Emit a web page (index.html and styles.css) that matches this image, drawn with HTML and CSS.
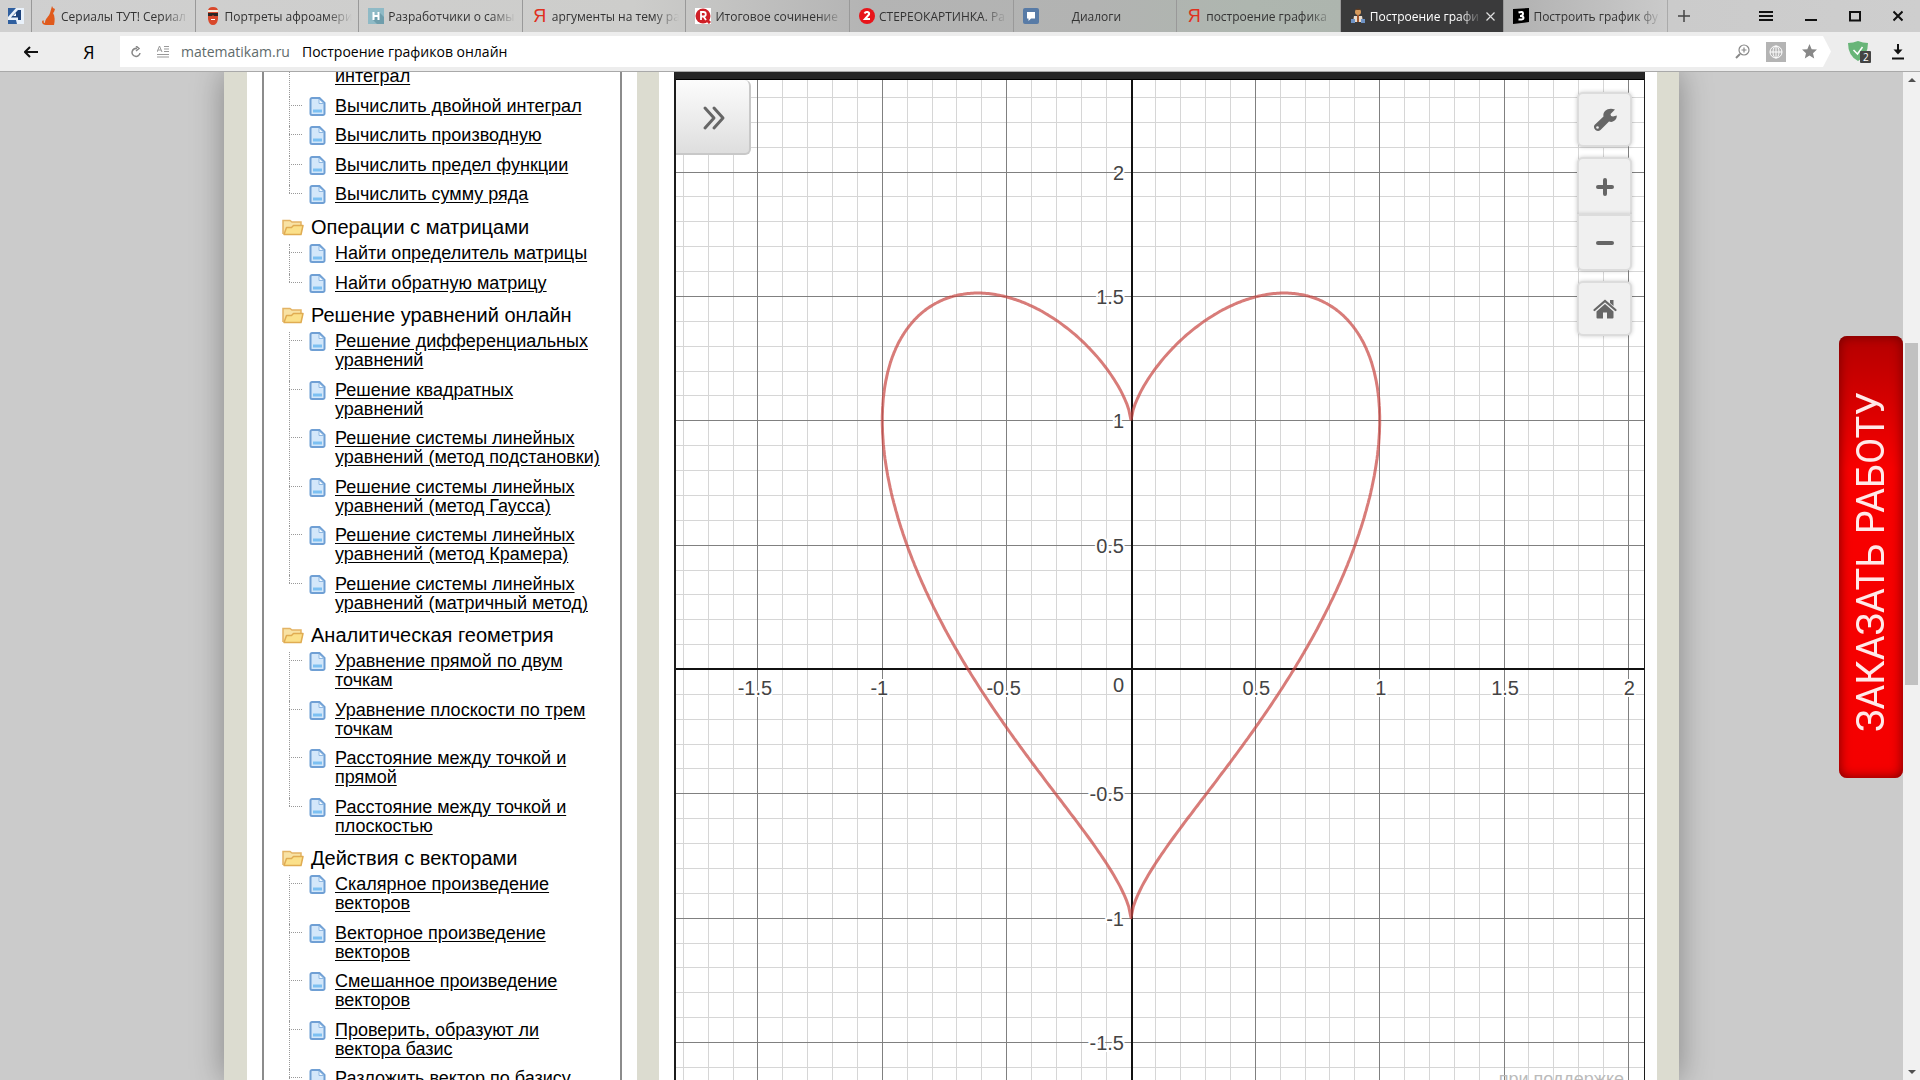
FILE: index.html
```html
<!DOCTYPE html>
<html lang="ru">
<head>
    <meta charset="UTF-8">
    <meta name="viewport" content="width=device-width, initial-scale=1.0">
    <title>Построение графиков онлайн</title>
    <link rel="stylesheet" href="styles.css">
</head>
<body>
    <!-- Shared icons -->
    <svg class="sprite" aria-hidden="true">
        <symbol id="icon-page" viewBox="0 0 17 19">
            <path d="M3 1h7.500l5 5v10.500a1.500 1.500 0 0 1-1.500 1.500H3A1.500 1.500 0 0 1 1.500 16.500V2.500A1.500 1.500 0 0 1 3 1z" fill="#d3e7fa" stroke="#6f9fd4" stroke-width="2"/>
            <path d="M10 2v4.500h5z" fill="#f2f9ff" stroke="#8fb8e2" stroke-width="1"/>
            <path d="M4 12.500h9v3H4z" fill="#7cc0f2"/>
        </symbol>
        <symbol id="icon-folder" viewBox="0 0 22 18">
            <path d="M1 16V2.500h7l2 1.500h9v4" fill="#f8e2a4" stroke="#e3b364" stroke-width="1.500"/>
            <path d="M2 16.500 4.500 9.500h5l2-2h9.500l-2 9z" fill="#fbe08a" stroke="#e0ac52" stroke-width="1.500" stroke-linejoin="round"/>
        </symbol>
    </svg>

    <header class="browser">
        <nav class="tabs">
            <button class="pinned" aria-label="Закреплённая вкладка">
                <svg width="16" height="16" viewBox="0 0 16 16"><path d="M0 0h16v16H0z" fill="#2f5f9f"/><path d="M8 0 0 9v3h8l1 4h7V0z" fill="#e9f1fa"/><path d="M10 2 3 9.500h7z" fill="#1d437c"/><path d="M10 2h3v10h-3z" fill="#1d437c"/><path d="M8 5v3H5z" fill="#fff"/></svg>
            </button>
            <button class="tab">
                <svg width="16" height="20" viewBox="0 0 16 20"><path d="M11 0l1 2 2 1-1 3-1 1c2 3 2 8 1 12H5c-2 0-4-1-4-3 0-1 1-2 2-1-1 1 0 2 1 2 0-5 4-6 5-10z" fill="#e05a1c"/></svg>
                <span>Сериалы ТУТ! Сериал</span>
            </button>
            <button class="tab">
                <svg width="16" height="20" viewBox="0 0 16 20"><path d="M3 5q0-4 5-4t5 4v8q-1 6-5 6t-5-6z" fill="#d9482b"/><path d="M3 4h10v2H3z" fill="#f6ead9"/><path d="M3 7h10v3H9l-1-1-1 1H3z" fill="#2b2625"/><path d="M6 13h4v1H6z" fill="#fff"/></svg>
                <span>Портреты афроамери</span>
            </button>
            <button class="tab">
                <svg width="16" height="16" viewBox="0 0 16 16"><path d="M0 0h16v16H0z" fill="#8fbac6"/><path d="M11 4l5 5v7H9l-4-4z" fill="#6f9eac"/><path d="M5.500 4v8M10.500 4v8M5.500 8h5" stroke="#fff" stroke-width="2"/></svg>
                <span>Разработчики о самы</span>
            </button>
            <button class="tab">
                <b class="ya">Я</b>
                <span>аргументы на тему ра</span>
            </button>
            <button class="tab">
                <svg width="16" height="16" viewBox="0 0 16 16"><path d="M0 0h16v16H0z" fill="#fff"/><circle cx="8" cy="8" r="7.500" fill="#cf1f26"/><path d="M11 11l4 4" stroke="#cf1f26" stroke-width="3"/><path d="M6 12V4h2.500a2 2 0 0 1 0 4.500H6M8.500 8.500 11 12" fill="none" stroke="#fff" stroke-width="1.800"/></svg>
                <span>Итоговое сочинение</span>
            </button>
            <button class="tab">
                <svg width="16" height="16" viewBox="0 0 16 16"><circle cx="8" cy="8" r="8" fill="#e8141a"/><path d="M5.500 5.500q1-2 3-1.500t1.500 2.500L6 11h5" fill="none" stroke="#fff" stroke-width="2"/></svg>
                <span>СТЕРЕОКАРТИНКА. Ра</span>
            </button>
            <button class="tab tab-center">
                <svg width="16" height="16" viewBox="0 0 16 16"><rect width="16" height="16" rx="2" fill="#587ba6"/><path d="M4 4h8v6.500H8L5.500 13v-2.500H4z" fill="#fff"/></svg>
                <span>Диалоги</span>
            </button>
            <button class="tab">
                <b class="ya">Я</b>
                <span>построение графика</span>
            </button>
            <button class="tab active">
                <svg width="16" height="16" viewBox="0 0 16 16"><circle cx="8" cy="4" r="3" fill="#d79a5c"/><path d="M5 2q3-3 6 0z" fill="#5b3a22"/><path d="M4 8h8l1 6H3z" fill="#e9ddd0"/><path d="M1 11h4v4H1zM11 11h4v4h-4z" fill="#6f93c5"/><path d="M7 7h2v7H7z" fill="#a2582e"/></svg>
                <span>Построение графи</span>
                <svg class="close" width="9" height="9" viewBox="0 0 9 9"><path d="M.5.5l8 8M8.500.5l-8 8" stroke="#ddd" stroke-width="1.200"/></svg>
            </button>
            <button class="tab">
                <svg width="16" height="16" viewBox="0 0 16 16"><path d="M0 1 16 0v14L0 16z" fill="#000"/><path d="M5.500 4.500q4.500-1.500 4.500 1T7 8q3.500 0 3.500 2t-5 1.500" fill="none" stroke="#fff" stroke-width="2"/></svg>
                <span>Построить график фу</span>
            </button>
            <div class="window-buttons">
                <button aria-label="Новая вкладка"><svg width="14" height="14" viewBox="0 0 14 14"><path d="M7 1v12M1 7h12" stroke="#444" stroke-width="1.500"/></svg></button>
                <i class="spacer"></i>
                <button aria-label="Меню"><svg width="14" height="12" viewBox="0 0 14 12"><path d="M0 2h14M0 6h14M0 10h14" stroke="#111" stroke-width="2"/></svg></button>
                <button aria-label="Свернуть"><svg width="12" height="12" viewBox="0 0 12 12"><path d="M0 10h12" stroke="#111" stroke-width="2"/></svg></button>
                <button aria-label="Развернуть"><svg width="12" height="12" viewBox="0 0 12 12"><path d="M1 2h10v8.500H1z" fill="none" stroke="#111" stroke-width="2"/></svg></button>
                <button aria-label="Закрыть"><svg width="10" height="12" viewBox="0 0 10 12"><path d="M.5 1.500l9 9M9.500 1.500l-9 9" stroke="#111" stroke-width="2"/></svg></button>
            </div>
        </nav>
        <div class="toolbar">
            <button class="back" aria-label="Назад"><svg width="14" height="12" viewBox="0 0 14 12"><path d="M1 6h13M6 1 1 6l5 5" fill="none" stroke="#111" stroke-width="2"/></svg></button>
            <button class="home-ya">Я</button>
            <div class="address">
                <button aria-label="Обновить"><svg width="10" height="12" viewBox="0 0 10 12"><path d="M6 2.500A4 4 0 1 0 9 7M5 0l3 2.500L5 5" fill="none" stroke="#888" stroke-width="1.500"/></svg></button>
                <svg width="12" height="12" viewBox="0 0 12 12"><path d="M0 6 2.500 0 5 6M1 4h3M7 .5h5M7 3h5M7 5.500h5M0 8.500h12M0 11h12" fill="none" stroke="#999"/></svg>
                <span class="host">matematikam.ru</span>
                <span class="page-title">Построение графиков онлайн</span>
                <i class="spacer"></i>
                <svg width="15" height="15" viewBox="0 0 15 15"><circle cx="9" cy="6" r="5" fill="none" stroke="#888" stroke-width="1.200"/><path d="M9 3.500v5M6.500 6h5" stroke="#888" stroke-width="1.200"/><path d="M5 10 1 14" stroke="#888" stroke-width="2"/></svg>
                <svg width="20" height="20" viewBox="0 0 20 20"><path d="M0 0h20v20H0z" fill="#b4b4b4"/><circle cx="10" cy="10" r="6" fill="none" stroke="#fff"/><ellipse cx="10" cy="10" rx="3" ry="6" fill="none" stroke="#fff"/><path d="M4 10h12M10 4v12" stroke="#fff"/></svg>
                <svg width="15" height="15" viewBox="0 0 15 15"><path d="M7.500 0l2.200 5.200 5.300.4-4 3.600 1.200 5.300-4.700-2.900-4.700 2.900L4 9.200 0 5.600l5.300-.4z" fill="#888"/></svg>
            </div>
            <button class="guard" aria-label="Антибаннер"><svg width="24" height="22" viewBox="0 0 24 22"><path d="M0 2q5 0 10-2 5 2 10 2 0 13-10 18Q0 15 0 2z" fill="#68b578"/><path d="M5.500 9l4 4 5-7" fill="none" stroke="#fff" stroke-width="1.500"/><rect x="12" y="10" width="11" height="12" rx="1" fill="#444"/><text x="15" y="20" class="guard-count">2</text></svg></button>
            <button aria-label="Загрузки"><svg width="12" height="16" viewBox="0 0 12 16"><path d="M6 0v9" stroke="#111" stroke-width="2"/><path d="M1.500 5.500h9L6 10.500z" fill="#111"/><path d="M0 14.500h12" stroke="#111" stroke-width="2"/></svg></button>
        </div>
    </header>

    <div class="viewport">
        <div class="page">
            <aside class="sidebar">
                <ul class="leaves cut">
                    <li class="tail"><a href="#">интеграл</a></li>
                    <li><svg><use href="#icon-page"/></svg><a href="#">Вычислить двойной интеграл</a></li>
                    <li><svg><use href="#icon-page"/></svg><a href="#">Вычислить производную</a></li>
                    <li><svg><use href="#icon-page"/></svg><a href="#">Вычислить предел функции</a></li>
                    <li><svg><use href="#icon-page"/></svg><a href="#">Вычислить сумму ряда</a></li>
                </ul>
                <h3><svg><use href="#icon-folder"/></svg>Операции с матрицами</h3>
                <ul class="leaves">
                    <li><svg><use href="#icon-page"/></svg><a href="#">Найти определитель матрицы</a></li>
                    <li><svg><use href="#icon-page"/></svg><a href="#">Найти обратную матрицу</a></li>
                </ul>
                <h3><svg><use href="#icon-folder"/></svg>Решение уравнений онлайн</h3>
                <ul class="leaves">
                    <li><svg><use href="#icon-page"/></svg><a href="#">Решение дифференциальных уравнений</a></li>
                    <li><svg><use href="#icon-page"/></svg><a href="#">Решение квадратных уравнений</a></li>
                    <li><svg><use href="#icon-page"/></svg><a href="#">Решение системы линейных уравнений (метод подстановки)</a></li>
                    <li><svg><use href="#icon-page"/></svg><a href="#">Решение системы линейных уравнений (метод Гаусса)</a></li>
                    <li><svg><use href="#icon-page"/></svg><a href="#">Решение системы линейных уравнений (метод Крамера)</a></li>
                    <li><svg><use href="#icon-page"/></svg><a href="#">Решение системы линейных уравнений (матричный метод)</a></li>
                </ul>
                <h3><svg><use href="#icon-folder"/></svg>Аналитическая геометрия</h3>
                <ul class="leaves">
                    <li><svg><use href="#icon-page"/></svg><a href="#">Уравнение прямой по двум точкам</a></li>
                    <li><svg><use href="#icon-page"/></svg><a href="#">Уравнение плоскости по трем точкам</a></li>
                    <li><svg><use href="#icon-page"/></svg><a href="#">Расстояние между точкой и прямой</a></li>
                    <li><svg><use href="#icon-page"/></svg><a href="#">Расстояние между точкой и плоскостью</a></li>
                </ul>
                <h3><svg><use href="#icon-folder"/></svg>Действия с векторами</h3>
                <ul class="leaves more">
                    <li><svg><use href="#icon-page"/></svg><a href="#">Скалярное произведение векторов</a></li>
                    <li><svg><use href="#icon-page"/></svg><a href="#">Векторное произведение векторов</a></li>
                    <li><svg><use href="#icon-page"/></svg><a href="#">Смешанное произведение векторов</a></li>
                    <li><svg><use href="#icon-page"/></svg><a href="#">Проверить, образуют ли вектора базис</a></li>
                    <li><svg><use href="#icon-page"/></svg><a href="#">Разложить вектор по базису</a></li>
                </ul>
            </aside>
            <main class="content">
                <div class="calculator">
                    <svg class="plot" id="plot"></svg>
                    <button class="expand" aria-label="Показать список"><svg width="24" height="26" viewBox="0 0 24 26"><path d="M3 3l9 10-9 10M12 3l9 10-9 10" fill="none" stroke="#666" stroke-width="3" stroke-linecap="round" stroke-linejoin="round"/></svg></button>
                    <div class="controls">
                        <button aria-label="Настройки"><svg width="24" height="24" viewBox="0 0 24 24"><path d="M22 1.500 17.500 6l.5 2 2 .5L23.800 7.500C24 12 20 15 16 13.500L7.500 22A4 4 0 0 1 1.500 17L10.500 8.500C9.500 4 14-1 22 1.500z" fill="#666"/><circle cx="4.500" cy="19.500" r="1.300" fill="#f0f0f0"/></svg></button>
                        <div class="zoom">
                            <button aria-label="Увеличить"><svg width="18" height="18" viewBox="0 0 18 18"><path d="M9 2v14M2 9h14" stroke="#666" stroke-width="4" stroke-linecap="round"/></svg></button>
                            <button aria-label="Уменьшить"><svg width="18" height="18" viewBox="0 0 18 18"><path d="M2 9h14" stroke="#666" stroke-width="4" stroke-linecap="round"/></svg></button>
                        </div>
                        <button aria-label="Исходный вид"><svg width="24" height="20" viewBox="0 0 24 20"><path d="M1.500 11 12 2l10.500 9" fill="none" stroke="#666" stroke-width="2.200" stroke-linecap="round"/><path d="M17 1h3.500v6L17 4z" fill="#666"/><path d="M12 5l8.500 7.500V18.500q0 1-1 1H14v-6h-4v6H4.500q-1 0-1-1v-6z" fill="#666"/></svg></button>
                    </div>
                    <p class="powered">при поддержке</p>
                </div>
            </main>
        </div>
        <a class="order" href="#">ЗАКАЗАТЬ РАБОТУ</a>
        <div class="scrollbar">
            <i class="arrow up"></i>
            <i class="before"></i>
            <i class="thumb"></i>
            <i class="after"></i>
            <i class="arrow down"></i>
        </div>
    </div>

    <script>
        const plot = document.getElementById('plot');
        const width = plot.clientWidth;
        const height = plot.clientHeight;

        // Pixels per minor step (0.1), and the origin
        const STEP = 24.87;
        const originX = Math.round(width * 0.4706);
        const originY = 589;

        function add(name, attrs, text) {
            const el = document.createElementNS('http://www.w3.org/2000/svg', name);
            for (const key in attrs) {
                el.setAttribute(key, attrs[key]);
            }
            if (text) {
                el.textContent = text;
            }
            plot.appendChild(el);
        }

        // Grid lines, every fifth one is darker
        function drawGrid(major) {
            const cls = major ? 'major' : 'minor';
            for (let i = -40; i <= 40; i++) {
                if (i === 0 || (i % 5 === 0) !== major) continue;
                const x = Math.floor(originX + i * STEP) - 1;
                const y = Math.round(originY - i * STEP);
                add('path', { class: cls, d: `M${x + 0.5} 0V${height}M0 ${y + 0.5}H${width}` });
            }
        }

        // Axis labels
        function drawLabels() {
            for (let i = -20; i <= 20; i += 5) {
                if (i === 0) continue;
                const shift = i < 0 ? -4 : 0;
                add('text', { class: 'label', x: originX + i * STEP + shift, y: originY + 26, 'text-anchor': 'middle' }, String(i / 10));
                add('text', { class: 'label', x: originX - 8, y: originY - i * STEP + 8, 'text-anchor': 'end' }, String(i / 10));
            }
            add('text', { class: 'label', x: originX - 8, y: originY + 23, 'text-anchor': 'end' }, '0');
        }

        // x^2 + (y - |x|^(2/3))^2 = 1
        function drawHeart() {
            let d = '';
            for (let k = 0; k <= 720; k++) {
                const t = k * Math.PI / 360;
                const x = Math.sin(t);
                const y = Math.cbrt(x * x) + Math.cos(t);
                d += (k ? 'L' : 'M') + (originX - 1 + x * STEP * 10).toFixed(1) + ' ' + (originY - y * STEP * 10).toFixed(1);
            }
            add('path', { class: 'curve', d: d });
        }

        drawGrid(false);
        drawGrid(true);
        add('path', { class: 'axis', d: `M${originX} 0V${height}M0 ${originY}H${width}` });
        drawLabels();
        drawHeart();
    </script>
</body>
</html>
```
FILE: styles.css
```css
* {
    box-sizing: border-box;
}
body {
    margin: 0;
    height: 100vh;
    display: flex;
    flex-direction: column;
    overflow: hidden;
    font-family: "Liberation Sans", Arial, sans-serif;
    color: #000;
}
button {
    border: none;
    background: none;
    padding: 0;
    font: inherit;
    color: inherit;
    display: flex;
    align-items: center;
    justify-content: center;
}
svg {
    flex: none;
}
.sprite {
    display: none;
}
.spacer {
    flex: 1;
}

/* Browser chrome */
.browser {
    font-family: "Open Sans", "Noto Sans", sans-serif;
    border-bottom: 1px solid #a9a9a9;
}
.tabs {
    display: grid;
    grid-template-columns: 31px repeat(10, minmax(0, 1fr)) 253px;
    height: 32px;
    background: linear-gradient(90deg, #d0d0d0, #cdcdcb 33%, #b4b4b4 45%, #b2b3b2 57%, #aeb6af 65%, #adb5ae 70%, #b2b2b2 79%, #cbcbcb 87%, #cecece);
}
.tab {
    gap: 4px;
    padding: 0 6px 0 9px;
    justify-content: flex-start;
    border-left: 1px solid #999;
    font-size: 12px;
    color: #333;
}
.tab span {
    flex: 1;
    overflow: hidden;
    white-space: nowrap;
    text-align: left;
    mask-image: linear-gradient(90deg, #000 80%, transparent);
}
.tab.tab-center {
    padding-right: 26px;
}
.tab-center span {
    text-align: center;
}
.tab.active {
    padding-right: 8px;
    background: #3a3a3b;
    color: #fff;
}
.ya {
    width: 16px;
    font-family: "Liberation Sans", Arial, sans-serif;
    font-size: 18px;
    font-weight: normal;
    color: #e0301e;
}
.window-buttons {
    display: flex;
    align-items: center;
    border-left: 1px solid #aaa;
    padding: 0 17px 0 9px;
    gap: 32px;
}
.toolbar {
    display: flex;
    align-items: center;
    height: 39px;
    background: #ededed;
    padding-right: 16px;
}
.back {
    width: 62px;
}
.home-ya {
    width: 54px;
    font-size: 18px;
}
.address {
    flex: 1;
    display: flex;
    align-items: center;
    height: 31px;
    margin-left: 4px;
    padding: 0 14px 0 11px;
    background: #fff;
    gap: 16px;
    font-size: 14px;
    clip-path: polygon(0 0, calc(100% - 8px) 0, 100% 50%, calc(100% - 8px) 100%, 0 100%);
}
.host {
    margin-left: -4px;
    color: #5f6b6b;
}
.page-title {
    margin-left: -4px;
}
.guard {
    margin: 0 20px 0 17px;
}
.guard-count {
    font-size: 10px;
    fill: #fff;
}

/* Web page */
.viewport {
    position: relative;
    flex: 1;
    min-height: 0;
    display: flex;
    background: #cbcbcb;
    overflow: hidden;
}
.page {
    flex: 0 1 1455px;
    min-width: 0;
    margin: 0 auto;
    display: flex;
    background: #fff;
    border: solid #dcdcd0;
    border-width: 0 22px 0 23px;
    box-shadow: 0 0 30px rgba(0, 0, 0, 0.35);
}
.sidebar {
    flex: 0 0 360px;
    margin: 0 15px;
    padding-left: 18px;
    border: solid #8c8c8c;
    border-width: 0 2px;
}
.sidebar h3 {
    display: flex;
    align-items: center;
    gap: 7px;
    margin: 1px 0 0;
    padding-bottom: 6px;
    font-size: 20px;
    font-weight: normal;
    line-height: 22px;
}
.sidebar h3 svg {
    width: 22px;
    height: 18px;
}
.leaves {
    list-style: none;
    margin: 0;
    padding: 0 14px 0 7px;
}
.leaves.cut {
    margin-top: -5px;
}
.leaves li {
    position: relative;
    display: flex;
    gap: 9px;
    padding: 0 0 10px 20px;
    font-size: 18px;
    line-height: 19px;
}
.leaves li:nth-child(odd) {
    padding-bottom: 11px;
}
.leaves li svg {
    width: 17px;
    height: 19px;
}
.leaves li.tail {
    padding-left: 46px;
}
.leaves a {
    color: #000;
    text-underline-offset: 2px;
}
/* Dotted branches of the tree */
.leaves li::before {
    content: "";
    position: absolute;
    left: 0;
    top: 0;
    bottom: 0;
    border-left: 1px dotted #999;
}
.leaves li:last-child::before {
    bottom: auto;
    height: 8px;
}
.leaves.more li:last-child::before {
    height: 100%;
}
.leaves li:not(.tail)::after {
    content: "";
    position: absolute;
    left: 0;
    top: 8px;
    width: 13px;
    border-top: 1px dotted #999;
}
.content {
    flex: 1;
    min-width: 0;
    display: flex;
    border-left: 22px solid #dcdcd0;
    padding: 0 12px 0 15px;
}
.calculator {
    position: relative;
    flex: 1;
    min-width: 0;
    border: solid #1c1c1c;
    border-width: 0 1px 0 2px;
    border-top: 7px solid #262626;
}
.plot {
    display: block;
    width: 100%;
    height: 100%;
    background: #fff;
    border-top: 1px solid #000;
}
.minor {
    stroke: #d6d6d6;
}
.major {
    stroke: #808080;
}
.axis {
    stroke: #111;
    stroke-width: 2px;
}
.label {
    font-size: 20px;
    fill: #444;
    stroke: #fff;
    stroke-width: 4px;
    paint-order: stroke;
}
.curve {
    fill: none;
    stroke: #c74440;
    stroke-opacity: 0.7;
    stroke-width: 3px;
    stroke-linejoin: round;
}
.expand {
    position: absolute;
    left: 0;
    top: 1px;
    width: 75px;
    height: 75px;
    padding: 2px 0 0 3px;
    background: linear-gradient(#fcfcfc, #dedede);
    border: solid #c8c8c8;
    border-width: 0 2px 2px 0;
    border-radius: 0 6px 6px 0;
}
.controls {
    position: absolute;
    right: 12px;
    top: 13px;
    display: flex;
    flex-direction: column;
    gap: 10px;
}
.controls button {
    width: 55px;
    height: 55px;
    background: #f0f0f0;
    border: 2px solid #dcdcdc;
    border-radius: 6px;
    box-shadow: 0 0 4px rgba(0, 0, 0, 0.2);
}
.controls .zoom button {
    height: 57px;
}
.controls .zoom button:first-child {
    border-radius: 6px 6px 0 0;
    border-bottom: none;
}
.controls .zoom button:last-child {
    border-radius: 0 0 6px 6px;
}
.powered {
    position: absolute;
    right: 20px;
    bottom: -9px;
    margin: 0;
    font-size: 18px;
    line-height: 20px;
    color: #bbb;
}
.order {
    position: absolute;
    right: 17px;
    top: 264px;
    width: 64px;
    height: 442px;
    padding-bottom: 10px;
    display: flex;
    align-items: center;
    justify-content: center;
    writing-mode: vertical-rl;
    transform: rotate(180deg);
    border-radius: 8px;
    background: linear-gradient(#f40000, #f80000 70%, #b40000);
    box-shadow: inset 0 0 12px #700000;
    color: #ffe9e9;
    font-family: Roboto, sans-serif;
    font-size: 38px;
    text-decoration: none;
}
.scrollbar {
    flex: 0 0 17px;
    display: flex;
    flex-direction: column;
    align-items: center;
    padding: 6px 0;
    background: #f1f1f1;
}
.arrow {
    border: 4px solid transparent;
}
.arrow.up {
    border-top: none;
    border-bottom-color: #505050;
}
.arrow.down {
    border-bottom: none;
    border-top-color: #505050;
}
.before {
    flex: 261;
}
.thumb {
    flex: 342;
    width: 13px;
    background: #c1c1c1;
}
.after {
    flex: 385;
}
```
